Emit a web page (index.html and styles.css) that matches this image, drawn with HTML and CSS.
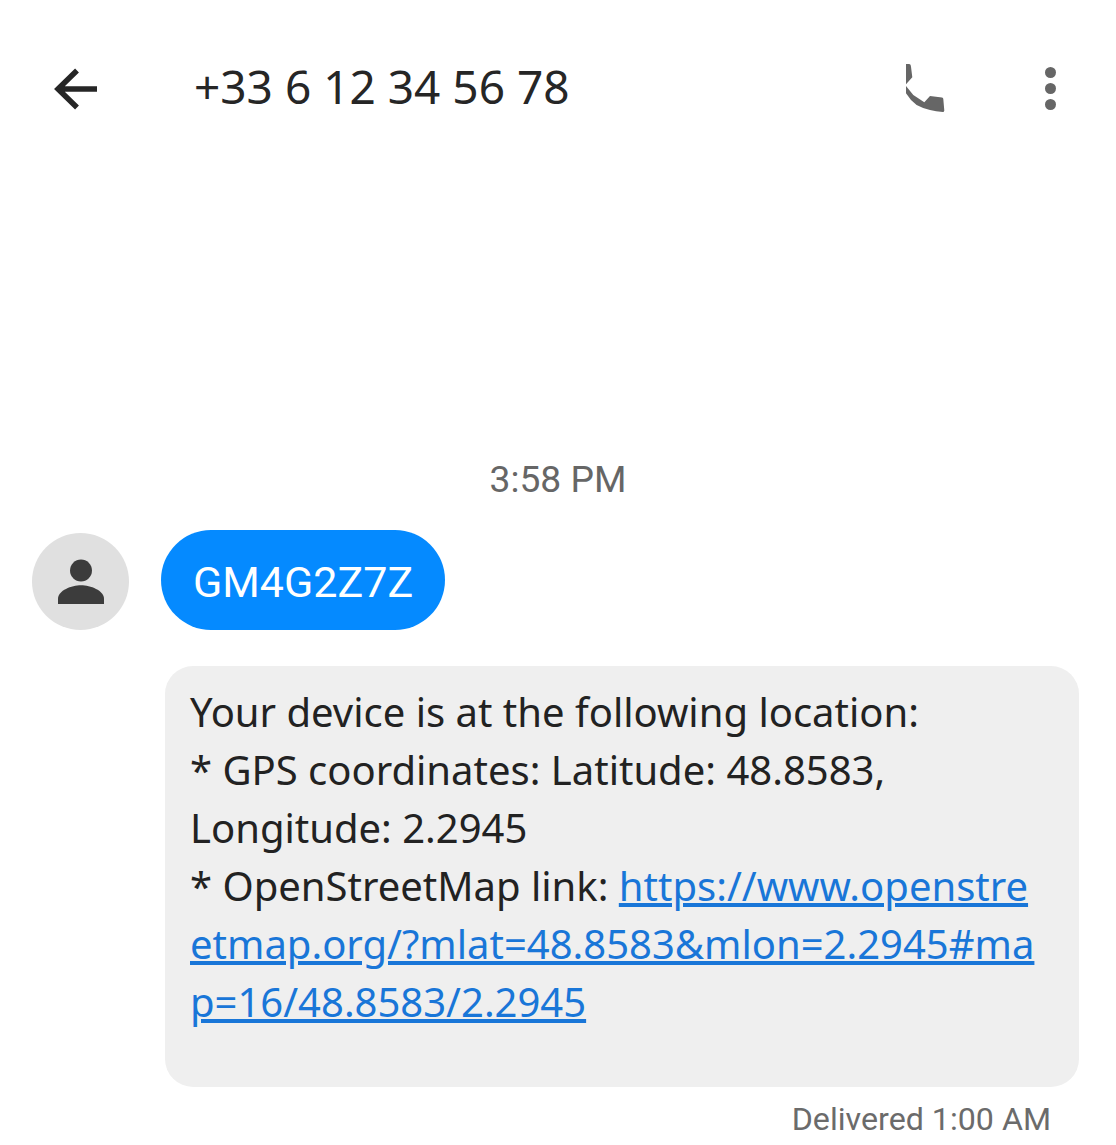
FILE: index.html
```html
<!DOCTYPE html>
<html lang="en">
<head>
  <meta charset="UTF-8" />
  <title>Messages</title>
  <link rel="stylesheet" href="styles.css">
</head>
<body>
  <header class="top-bar">
    <svg class="back-icon" viewBox="0 0 46 42" width="46" height="42">
      <path d="M44 21H5M24 2.500 5 21l19 18.500" fill="none" stroke="#262626" stroke-width="5.500"/>
    </svg>
    <h1 class="title">+33 6 12 34 56 78</h1>
    <svg class="call-icon" viewBox="0 0 39 48" width="39" height="48">
      <path d="M0 0h3.300Q5 0 5 2.700l1.300 10.600L0 20.300z" fill="#666"/>
      <path d="M0 22l7.300 9 11 7.300L24 32l12 1.500q1.300.3 1.300 1.500l1 11.500q0 1.500-1.500 1.500Q30 47.500 24 46 17 44.500 10.600 41 4 36 0 29.300z" fill="#666"/>
    </svg>
    <div class="more-icon"><span></span><span></span><span></span></div>
  </header>

  <main class="thread">
    <div class="time">3:58 PM</div>
    <div class="first-row">
      <div class="avatar">
        <svg viewBox="0 0 44 44" width="46" height="46">
          <circle cx="22" cy="11" r="10.500" fill="#3c3c3c"/>
          <path d="M0 43v-5c0-8 13-13 22-13s22 5 22 13v5z" fill="#3c3c3c"/>
        </svg>
      </div>
      <div class="bubble-blue">GM4G2Z7Z</div>
    </div>
    <div class="bubble-grey">
      Your device is at the following location:<br>
      * GPS coordinates: Latitude: 48.8583, Longitude: 2.2945<br>
      * OpenStreetMap link: <a href="#">https://www.openstreetmap.org/?mlat=48.8583&amp;mlon=2.2945#map=16/48.8583/2.2945</a>
    </div>
    <div class="status">Delivered 1:00 AM</div>
  </main>
</body>
</html>
```

FILE: styles.css
```css
html, body {
  margin: 0;
  background: #fff;
  overflow: hidden;
}
body {
  height: 1145px;
  font-family: "Noto Sans", sans-serif;
  color: #222;
}
.top-bar {
  display: flex;
  align-items: center;
  height: 176px;
  padding: 0 60px 0 53px;
  box-sizing: border-box;
}
.back-icon { flex: none; margin-top: 2px; }
.title {
  flex: 1;
  margin: 0 0 4px 95px;
  font-size: 46px;
  font-weight: 400;
  color: #262626;
}
.call-icon { flex: none; margin-right: 99.500px; }
.more-icon {
  display: flex;
  flex-direction: column;
  gap: 5px;
  margin-right: 0.500px;
}
.more-icon span {
  width: 11px;
  height: 11px;
  border-radius: 50%;
  background: #666;
}
.thread {
  display: flex;
  flex-direction: column;
  padding-top: 280px;
}
.time {
  text-align: center;
  font-family: Roboto, sans-serif;
  font-size: 37.200px;
  line-height: 46px;
  color: #666;
}
.first-row {
  display: flex;
  align-items: flex-end;
  gap: 32px;
  margin: 28px 0 0 32px;
}
.avatar {
  display: flex;
  align-items: center;
  justify-content: center;
  width: 97px;
  height: 97px;
  border-radius: 50%;
  background: #e0e0e0;
}
.bubble-blue {
  display: flex;
  align-items: center;
  height: 100px;
  padding: 4px 32px 0;
  box-sizing: border-box;
  border-radius: 50px;
  background: #058aff;
  color: #fff;
  font-family: Roboto, sans-serif;
  font-size: 43px;
}
.bubble-grey {
  width: 914px;
  height: 421px;
  box-sizing: border-box;
  margin: 36px 0 0 165px;
  padding: 17px 44px 0 25px;
  border-radius: 28px;
  background: #efefef;
  font-size: 40px;
  line-height: 58px;
}
.bubble-grey a {
  color: #1976d8;
  word-break: break-all;
}
.status {
  margin: 12px 65px 0 0;
  text-align: right;
  font-family: Roboto, sans-serif;
  font-size: 32.200px;
  line-height: 40px;
  color: #6b6b6b;
}
```
